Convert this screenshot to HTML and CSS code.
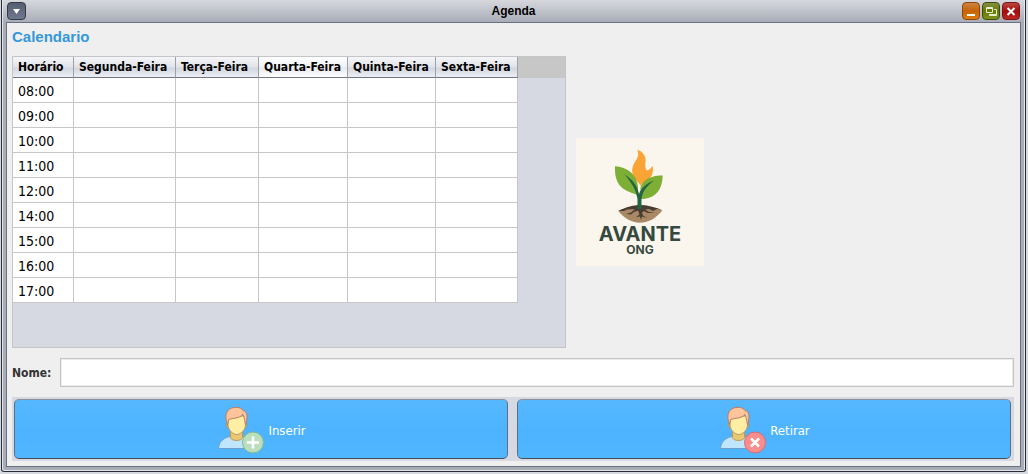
FILE: index.html
```html
<!DOCTYPE html>
<html lang="pt-BR">
<head>
<meta charset="utf-8">
<title>Agenda</title>
<link rel="stylesheet" href="styles.css">
</head>
<body>
<svg class="defs" width="0" height="0" aria-hidden="true">
  <symbol id="person" viewBox="0 0 48 48">
    <path d="M2.5 42.500C3 35 8.500 31 15 30.500H26C32 31 37 35 37.500 42.500Z" fill="#bfe5ff" stroke="#6f9fcc"/>
    <path d="M14.500 25H26.500V31.500C25.500 35.500 15.500 35.500 14.500 31.500Z" fill="#e8c870" stroke="#bd9850"/>
    <path d="M11.500 17.500C9.500 16.500 10 21.500 12.500 22ZM29.500 17.500C31.500 16.500 31 21.500 28.500 22Z" fill="#e8c870" stroke="#b58b51"/>
    <path d="M12 10H29.500V19C29.500 24 24.500 28.500 20.800 28.500C17 28.500 12 24 12 19Z" fill="#ffeea3" stroke="#ba9b65"/>
    <path d="M11.500 18.500C9.500 13 9 8 12 4.500C16 0 25 .5 27 4.500C32 5 31.500 13 29.800 18.500L29 17C29 13 28 12 27 8.500C23.500 12.500 17 12 12.700 13.500Z" fill="#ffc49c" stroke="#b97c61"/>
  </symbol>
</svg>
<div class="window">
  <header class="titlebar">
    <button class="tool menu" type="button" aria-label="Menu da janela"><svg width="19" height="17" viewBox="0 0 19 17"><path d="M6 6H13L9.500 11Z" fill="#fff"/></svg></button>
    <h1 class="title">Agenda</h1>
    <div class="controls">
      <button class="tool minimize" type="button" aria-label="Minimizar"><svg width="18" height="17" viewBox="0 0 18 17"><path d="M5 11H13V13H5Z" fill="#fff"/></svg></button>
      <button class="tool restore" type="button" aria-label="Restaurar"><svg width="18" height="17" viewBox="0 0 18 17" fill="none" stroke="#e8edcf"><path d="M4.500 4.500H10.500V9.500H4.500ZM4 5.500H11M12 6.500H14.500V12.500H7.500V11M8 11.500H14"/></svg></button>
      <button class="tool close" type="button" aria-label="Fechar"><svg width="18" height="17" viewBox="0 0 18 17"><path d="M5.500 5L12.500 12M12.500 5L5.500 12" stroke="#fff" stroke-width="2"/></svg></button>
    </div>
  </header>
  <main class="content">
    <h2 class="heading">Calendario</h2>
    <section class="schedule">
      <div class="pane">
        <div class="corner"></div>
        <table class="grid">
          <colgroup><col class="hour"><col class="mon"><col class="tue"><col class="wed"><col class="thu"><col class="fri"></colgroup>
          <thead><tr><th>Horário</th><th>Segunda-Feira</th><th>Terça-Feira</th><th class="lit">Quarta-Feira</th><th>Quinta-Feira</th><th>Sexta-Feira</th></tr></thead>
          <tbody>
            <tr><td>08:00</td><td></td><td></td><td></td><td></td><td></td></tr>
            <tr><td>09:00</td><td></td><td></td><td></td><td></td><td></td></tr>
            <tr><td>10:00</td><td></td><td></td><td></td><td></td><td></td></tr>
            <tr><td>11:00</td><td></td><td></td><td></td><td></td><td></td></tr>
            <tr><td>12:00</td><td></td><td></td><td></td><td></td><td></td></tr>
            <tr><td>14:00</td><td></td><td></td><td></td><td></td><td></td></tr>
            <tr><td>15:00</td><td></td><td></td><td></td><td></td><td></td></tr>
            <tr><td>16:00</td><td></td><td></td><td></td><td></td><td></td></tr>
            <tr><td>17:00</td><td></td><td></td><td></td><td></td><td></td></tr>
          </tbody>
        </table>
      </div>
      <svg class="logo" width="128" height="128" viewBox="0 0 128 128" role="img" aria-label="Avante ONG">
        <path d="M0 0H128V128H0Z" fill="#fbf6ed"/>
        <path d="M61.300 12C67 13 70.500 19 69.500 24C69 28 69.500 32 71 32.500C73.500 32 75 29.500 76.800 28C77.500 34 76 39 72 42C68 44 65.500 45 64.500 48C62.500 43 57 41 56.300 34C55.500 24 65 21 61.300 12Z" fill="#fba436"/>
        <path d="M39 28.300C51 29 61 36 62 49V57C50 53 38 50 39 28.300Z" fill="#7dae35"/>
        <path d="M86.700 37.500C75 37 64 43 64.500 52V61C77 61 86 55 86.700 37.500Z" fill="#7dae35"/>
        <path d="M42.300 73C52 67 76 67 86.300 72.500C80 80 73 84.700 64 84.700C55 84.700 48 80 42.300 73Z" fill="#a98965"/>
        <path d="M42.300 73C50 69 58 67 64 67C71 67 79 69 86.300 72L81 71L77 73L73 71L69 71.500L73 74L79 75L72 75L67.500 73L66 75L67 77.500L71 80L66 78.500L65 82L64 78.500L60 79L63.500 76.500L62 72.500L58 74L55 76.500L50 76L55 74.500L59 71L51 71.500L48 73Z" fill="#493d32"/>
        <path d="M48.500 36.500C56 41 61 47 63 56C65 50 71 45 78 42.500C71 48 66.500 53 65.500 61V71H61.500V61C60 51 55 44 48.500 36.500Z" fill="#246541"/>
        <text class="logo-name" x="64" y="103">AVANTE</text>
        <text class="logo-kind" x="64" y="116">ONG</text>
      </svg>
    </section>
    <div class="field">
      <label for="nome">Nome:</label>
      <input id="nome" type="text">
    </div>
    <div class="actions">
      <button class="action" type="button">
        <svg width="48" height="48" viewBox="0 0 48 48" aria-hidden="true"><use href="#person"/><circle cx="37" cy="36.500" r="10.500" fill="#bbdfbd" stroke="#7fb896"/><path d="M37 30.500V42.500M31 36.500H43" stroke="#fff" stroke-width="2.500"/></svg>
        <span>Inserir</span>
      </button>
      <button class="action" type="button">
        <svg width="48" height="48" viewBox="0 0 48 48" aria-hidden="true"><use href="#person"/><circle cx="37" cy="36.500" r="10.500" fill="#f98c8c" stroke="#d16f79"/><path d="M33 32.500L41 40.500M41 32.500L33 40.500" stroke="#fff" stroke-width="2.500"/></svg>
        <span>Retirar</span>
      </button>
    </div>
  </main>
</div>
</body>
</html>
```
FILE: styles.css
```css
* { box-sizing: border-box; }
body {
  margin: 0;
  min-height: 100vh;
  padding: 0 2px 2px 1px;
  display: flex;
  background: #d6d9df;
  color: #000;
  font-family: "DejaVu Sans Condensed", "DejaVu Sans", sans-serif;
  font-stretch: condensed;
}
.defs { position: absolute; }
.window {
  flex: 1;
  display: flex;
  flex-direction: column;
  padding: 0 4px 4px;
  border: 1px solid #272c38;
  border-top: 0;
  border-radius: 0 0 3px 3px;
  background: linear-gradient(#d6d8dd 0, #a9adb8 22px, #a9adb8 100%);
  box-shadow: inset 1px -1px #e4e6ec, inset -1px 0 #e4e6ec;
}
.titlebar {
  display: grid;
  grid-template-columns: 1fr auto 1fr;
  align-items: center;
  height: 22px;
  padding: 0 1px;
}
.title {
  margin: 0;
  padding-top: 1px;
  font: bold 12px/21px "Liberation Sans", Arial, sans-serif;
}
.controls { display: flex; justify-content: flex-end; gap: 2px; }
.tool {
  display: block;
  height: 18px;
  padding: 0;
  border: 1px solid #333945;
  border-radius: 4px;
}
.tool svg { display: block; margin: -1px; }
.menu { width: 19px; background: linear-gradient(#565e71, #6f788c); }
.minimize, .restore, .close { width: 18px; }
.minimize { border-color: #91450b; background: linear-gradient(#c98549, #c76200 50%, #df7b0c); }
.restore { border-color: #3e4c08; background: linear-gradient(#839043, #647800 50%, #80921d); }
.close { border-color: #7b1516; background: linear-gradient(#bb4943, #a30d09 50%, #bc2820); }
.content {
  flex: 1;
  display: flex;
  flex-direction: column;
  padding: 5px;
  border: 1px solid #687082;
  background: #efefef;
}
.heading {
  margin: 0 0 10px;
  color: #3498db;
  font: bold 15px/18px "Liberation Sans", Arial, sans-serif;
}
.schedule { flex: 1; display: flex; align-items: center; gap: 10px; }
.pane {
  position: relative;
  align-self: stretch;
  flex: 0 1 554px;
  border: 1px solid #c5c5c9;
  background: #d6d9e1;
}
.corner { height: 21px; margin-bottom: -21px; background: #c7c7c7; }
.grid { position: relative; table-layout: fixed; width: 505px; border-spacing: 0; }
.hour { width: 61px; }
.mon { width: 102px; }
.tue { width: 83px; }
.wed { width: 89px; }
.thu { width: 88px; }
.fri { width: 82px; }
.grid th {
  height: 21px;
  padding: 1px 0 0 5px;
  border-right: 1px solid #9da0a8;
  border-bottom: 1px solid #737783;
  background: linear-gradient(#f5f6f8, #e1e3e9 50%, #d3d6df 55%, #eceef4);
  font-size: 12px;
  line-height: 19px;
  text-align: left;
  white-space: nowrap;
}
.grid .lit { background: linear-gradient(#fff, #f0f1f5 50%, #e6e8ee 55%, #fff); }
.grid td {
  height: 25px;
  padding: 2px 5px 0;
  border-right: 1px solid #c7c7c7;
  border-bottom: 1px solid #c7c7c7;
  background: #fff;
  font-size: 14px;
  line-height: 22px;
}
.logo { flex: none; }
.logo text { text-anchor: middle; fill: #36493e; font-family: Inter, sans-serif; }
.logo-name { font-size: 20px; font-weight: 700; }
.logo-kind { font-size: 12px; font-weight: 700; }
.field { display: flex; align-items: center; gap: 9px; margin: 10px 1px 10px 0; }
.field label { color: #333; font-size: 12px; font-weight: bold; }
.field input {
  flex: 1;
  min-width: 0;
  height: 29px;
  padding: 0 6px;
  border: 1px solid #c3c4c6;
  background: #fff;
  box-shadow: inset 0 0 0 1px #ececec;
  font: inherit;
}
.actions {
  display: flex;
  gap: 9px;
  margin-right: 1px;
  padding: 2px 3px 2px 2px;
  background: #d6d9e1;
}
.action {
  flex: 1;
  display: flex;
  align-items: center;
  justify-content: center;
  gap: 4px;
  height: 60px;
  padding: 3px 6px 1px;
  border: 1px solid;
  border-color: #8a9199 #5d7082 #454f5c;
  border-radius: 5px;
  background: linear-gradient(#55b8ff, #4db3ff 60%, #50b6ff);
  color: #fff;
  font: inherit;
  font-size: 13px;
}
```
